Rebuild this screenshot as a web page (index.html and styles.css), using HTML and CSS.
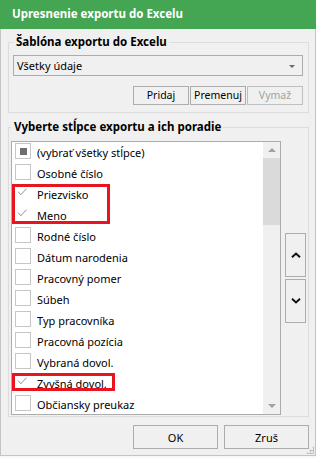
FILE: index.html
```html
<!DOCTYPE html>
<html lang="sk">
<head>
	<meta charset="UTF-8">
	<meta name="viewport" content="width=device-width, initial-scale=1.0">
	<title>Upresnenie exportu do Excelu</title>
	<link rel="stylesheet" href="styles.css">
</head>
<body>
	<div class="okno">
		<header class="titulok">Upresnenie exportu do Excelu</header>
		<main class="obsah">
			<fieldset class="skupina sablona">
				<legend>Šablóna exportu do Excelu</legend>
				<div class="combo">
					<span>Všetky údaje</span>
					<span class="combo-sipka"></span>
				</div>
				<div class="sablona-tlacidla">
					<button type="button" class="btn">Pridaj</button>
					<button type="button" class="btn">Premenuj</button>
					<button type="button" class="btn" disabled>Vymaž</button>
				</div>
			</fieldset>

			<fieldset class="skupina stlpce">
				<legend>Vyberte stĺpce exportu a ich poradie</legend>
				<div class="stlpce-telo">
					<div class="zoznam">
						<ul class="polozky">
							<li><span class="box ciastocne"></span>(vybrať všetky stĺpce)</li>
							<li><span class="box"></span>Osobné číslo</li>
							<li><span class="box oznacene"><svg width="16" height="16" viewBox="0 0 16 16"><polyline points="2.5,6.5 5.5,10 12,3" fill="none" stroke="#8c8c8c" stroke-width="1.1"/></svg></span>Priezvisko</li>
							<li><span class="box oznacene"><svg width="16" height="16" viewBox="0 0 16 16"><polyline points="2.5,6.5 5.5,10 12,3" fill="none" stroke="#8c8c8c" stroke-width="1.1"/></svg></span>Meno</li>
							<li><span class="box"></span>Rodné číslo</li>
							<li><span class="box"></span>Dátum narodenia</li>
							<li><span class="box"></span>Pracovný pomer</li>
							<li><span class="box"></span>Súbeh</li>
							<li><span class="box"></span>Typ pracovníka</li>
							<li><span class="box"></span>Pracovná pozícia</li>
							<li><span class="box"></span>Vybraná dovol.</li>
							<li><span class="box oznacene"><svg width="16" height="16" viewBox="0 0 16 16"><polyline points="2.5,6.5 5.5,10 12,3" fill="none" stroke="#8c8c8c" stroke-width="1.1"/></svg></span>Zvyšná dovol.</li>
							<li><span class="box"></span>Občiansky preukaz</li>
						</ul>
						<div class="posuvnik">
							<div class="posuvnik-hore"><span class="troj-hore"></span></div>
							<div class="posuvnik-palec"></div>
							<div class="posuvnik-draha"></div>
							<div class="posuvnik-dole"><span class="troj-dole"></span></div>
						</div>
						<div class="oznacenie oznacenie-1"></div>
						<div class="oznacenie oznacenie-2"></div>
					</div>
					<div class="poradie">
						<button type="button" class="btn btn-poradie">
							<svg width="10" height="6" viewBox="0 0 10 6"><polyline points="1,5.2 5,1.5 9,5.2" fill="none" stroke="#111" stroke-width="2"/></svg>
						</button>
						<button type="button" class="btn btn-poradie">
							<svg width="10" height="6" viewBox="0 0 10 6"><polyline points="1,0.8 5,4.5 9,0.8" fill="none" stroke="#111" stroke-width="2"/></svg>
						</button>
					</div>
				</div>
			</fieldset>

			<div class="dialog-tlacidla">
				<button type="button" class="btn btn-dialog">OK</button>
				<button type="button" class="btn btn-dialog">Zruš</button>
			</div>
		</main>
		<div class="uchop"></div>
	</div>
</body>
</html>
```

FILE: styles.css
```css
* {
	margin: 0;
	padding: 0;
	box-sizing: border-box;
	font-family: "Noto Sans", sans-serif;
	font-size: 11px;
}
body {
	background-color: #f7f7f7;
}
.okno {
	position: relative;
	width: 316px;
	height: 456px;
	background-color: #f0f0f0;
	border: solid 1px #c4c4c4;
	border-top: none;
}
.titulok {
	height: 29px;
	margin: 0 -1px;
	padding-left: 12px;
	line-height: 28px;
	background-color: #44a552;
	color: white;
	font-size: 11.5px;
	font-weight: bold;
}
.obsah {
	padding: 5px 6px 6px 7px;
}
.skupina {
	border: solid 1px #dcdcdc;
}
.skupina legend {
	line-height: 16px;
	padding: 0 2px 0 3px;
	font-size: 11.5px;
	font-weight: bold;
	color: #000;
}
.sablona {
	padding: 5px 5px 7px 4px;
}
.combo {
	display: flex;
	align-items: center;
	justify-content: space-between;
	height: 21px;
	padding: 0 7px 0 3px;
	border: solid 1px #acacac;
	color: #000;
}
.combo-sipka {
	width: 0;
	height: 0;
	border-left: 3px solid transparent;
	border-right: 3px solid transparent;
	border-top: 3px solid #6a6a6a;
	margin-top: 1px;
}
.sablona-tlacidla {
	display: flex;
	justify-content: flex-end;
	gap: 1px;
	margin-top: 10px;
}
.btn {
	display: flex;
	align-items: center;
	justify-content: center;
	background-color: #f0f0f0;
	border: solid 1px #adadad;
	color: #000;
}
.btn:disabled {
	color: #a3a3a3;
	border-color: #bfbfbf;
}
.sablona-tlacidla .btn {
	width: 56px;
	height: 19px;
	line-height: 17px;
	font-size: 10.5px;
}
.stlpce {
	margin-top: 6px;
	padding: 6px 2px 1px 2px;
}
.stlpce-telo {
	display: flex;
	align-items: center;
	gap: 4px;
}
.zoznam {
	position: relative;
	display: flex;
	width: 270px;
	height: 274px;
	border: solid 1px #acacac;
	background-color: white;
	overflow: hidden;
}
.polozky {
	flex: 1;
	list-style: none;
}
.polozky li {
	display: flex;
	align-items: flex-start;
	height: 21px;
	line-height: 21px;
	padding-left: 3px;
	color: #000;
	white-space: nowrap;
}
.box {
	flex: none;
	width: 16px;
	height: 16px;
	margin: 1px 6px 0 0;
	border: solid 1px #c6c6c6;
	background-color: white;
	display: flex;
	align-items: center;
	justify-content: center;
}
.box.oznacene {
	border-color: transparent;
}
.box.ciastocne::after {
	content: "";
	width: 7px;
	height: 7px;
	background-color: #6e6e6e;
}
.posuvnik {
	display: flex;
	flex-direction: column;
	width: 17px;
	background-color: #f0f0f0;
}
.posuvnik-hore, .posuvnik-dole {
	display: flex;
	align-items: center;
	justify-content: center;
	height: 16px;
	flex: none;
}
.posuvnik-palec {
	height: 67px;
	background-color: #dadada;
}
.posuvnik-draha {
	flex: 1;
}
.troj-hore {
	border-left: 4px solid transparent;
	border-right: 4px solid transparent;
	border-bottom: 4px solid #a3a3a3;
}
.troj-dole {
	border-left: 4px solid transparent;
	border-right: 4px solid transparent;
	border-top: 4px solid #a3a3a3;
}
.oznacenie {
	position: absolute;
	left: 0;
	border: solid 3px #e8141f;
}
.oznacenie-1 {
	top: 42px;
	width: 98px;
	height: 40px;
}
.oznacenie-2 {
	top: 231px;
	width: 103px;
	height: 18px;
}
.poradie {
	display: flex;
	flex-direction: column;
	gap: 2px;
}
.btn-poradie {
	width: 21px;
	height: 44px;
}
.dialog-tlacidla {
	display: flex;
	justify-content: flex-end;
	gap: 6px;
	margin-top: 8px;
}
.btn-dialog {
	width: 85px;
	height: 24px;
}
.uchop {
	position: absolute;
	right: 1px;
	bottom: 1px;
	width: 8px;
	height: 8px;
	background-image: radial-gradient(circle, #c2c2c2 1px, transparent 1.2px);
	background-size: 3px 3px;
	clip-path: polygon(100% 0, 100% 100%, 0 100%);
}
```
